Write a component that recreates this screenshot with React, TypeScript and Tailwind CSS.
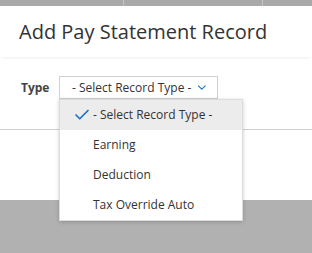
import { Check, ChevronDown } from 'lucide-react';

const OPTIONS = ['- Select Record Type -', 'Earning', 'Deduction', 'Tax Override Auto'];

export default function App() {
  return (
    <div className="relative w-[312px] h-[253px] overflow-hidden bg-[#b1b1b1] font-['Open_Sans',sans-serif] text-[#333]">
      {/* page behind the dialog */}
      <div className="flex h-[6px] bg-[#a9a9a9]">
        <div className="w-[124px] border-r border-[#c4c4c4]" />
        <div className="w-[139px] border-r border-[#c4c4c4]" />
      </div>

      <div className="bg-white h-[194px] flex flex-col">
        <div className="h-[51px] flex items-center px-[19px] shadow-[0_2px_4px_-2px_rgba(0,0,0,0.12)]">
          <h1 className="text-[20px] leading-none text-[#333]">Add Pay Statement Record</h1>
        </div>
        <div className="flex items-center pt-[19px] pl-[21px]">
          <span className="text-[12px] font-bold text-[#444] w-[38px]">Type</span>
          <div className="flex items-center h-[23px] w-[159px] border border-[#d0d0d0] pl-[12px] pr-[8px] gap-[4px]">
            <span className="text-[12px] whitespace-nowrap">- Select Record Type -</span>
            <ChevronDown size={17} strokeWidth={2} className="text-[#1a73c8]" />
          </div>
        </div>
        <div className="mt-[30px] border-t border-[#cfcfcf]" />
      </div>

      {/* open menu */}
      <div className="absolute left-[59px] top-[99px] w-[184px] bg-white border border-[#dcdcdc] shadow-[0_1px_4px_rgba(0,0,0,0.2)]">
        {OPTIONS.map((opt, i) => (
          <div key={opt} className={`flex items-center h-[30px] ${i === 0 ? 'bg-[#ececec]' : ''}`}>
            <div className="w-[33px] flex justify-end pr-[2px]">
              {i === 0 && <Check size={18} strokeWidth={2.25} className="text-[#1a73c8]" />}
            </div>
            <span className="text-[12px] whitespace-nowrap text-[#333]">{opt}</span>
          </div>
        ))}
      </div>
    </div>
  );
}
